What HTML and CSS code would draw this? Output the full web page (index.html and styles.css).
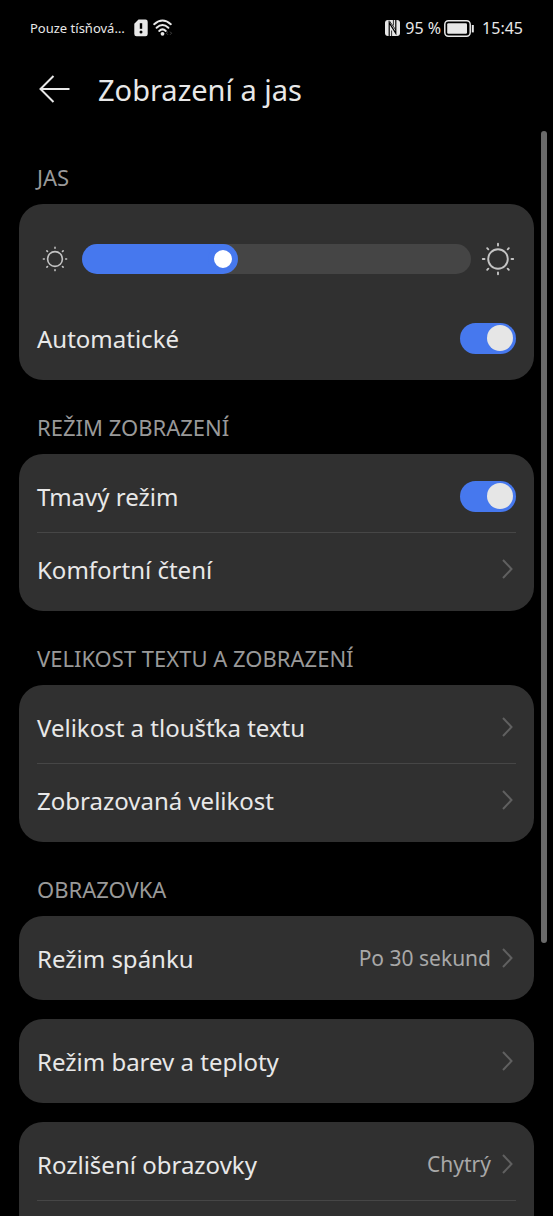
FILE: index.html
```html
<!DOCTYPE html>
<html lang="cs">
<head>
<meta charset="utf-8">
<meta name="viewport" content="width=device-width, initial-scale=1">
<title>Zobrazení a jas</title>
<link rel="stylesheet" href="styles.css">
</head>
<body>
<div class="status-bar">
  <div class="status-group">
    <span class="carrier">Pouze tísňová…</span>
    <svg class="sim-icon" width="14" height="18" viewBox="0 0 14 18" aria-hidden="true">
      <path d="M4.500 0.500H11.500Q13.700 0.500 13.700 2.700V15Q13.700 17.200 11.500 17.200H2.500Q0.300 17.200 0.300 15V4.700Z" fill="#e8e8e8"/>
      <path d="M7 4.200V9.800" stroke="#000" stroke-width="2.400"/>
      <circle cx="7" cy="13" r="1.500" fill="#000"/>
    </svg>
    <svg class="wifi-icon" width="20" height="18" viewBox="0 0 20 18" aria-hidden="true">
      <g fill="none" stroke="#e8e8e8" stroke-width="2" stroke-linecap="round">
        <path d="M1.200 5.200Q9.500 -2.200 17.800 5.200"/>
        <path d="M3.600 8.700Q9.500 3.200 15.400 8.700"/>
        <path d="M6.200 11.900Q9.500 8.800 12.800 11.900"/>
      </g>
      <circle cx="9.500" cy="14.800" r="1.900" fill="#e8e8e8"/>
      <path d="M15 12.600L13.400 14.200L15 15.800M17 12.600L18.600 14.200L17 15.800" fill="none" stroke="#444"/>
    </svg>
  </div>
  <div class="status-group">
    <svg class="nfc-icon" width="15" height="16" viewBox="0 0 15 16" aria-hidden="true">
      <rect width="15" height="16" rx="3" fill="#e8e8e8"/>
      <path d="M4.200 16V2.600L10.800 13.400V0" fill="none" stroke="#000" stroke-width="1.200"/>
      <path d="M6.600 16V10.500M8.400 5.500V0M4.200 0.600L10.800 10" fill="none" stroke="#000" stroke-width="0.800"/>
    </svg>
    <span class="status-text">95 %</span>
    <svg class="battery-icon" width="31" height="17" viewBox="0 0 31 17" aria-hidden="true">
      <rect x="0.800" y="0.800" width="25.400" height="15.400" rx="3.600" fill="none" stroke="#e8e8e8" stroke-width="1.500"/>
      <rect x="3.200" y="3.200" width="19.800" height="10.600" rx="1.200" fill="#e8e8e8"/>
      <path d="M28.800 5V12.400" stroke="#e8e8e8" stroke-width="2"/>
    </svg>
    <span class="status-text clock">15:45</span>
  </div>
</div>

<header class="app-bar">
  <button class="back" type="button" aria-label="Zpět">
    <svg width="32" height="28" viewBox="0 0 32 28" aria-hidden="true">
      <path d="M30.500 14H1.200M14.500 1L1.500 14L14.500 27" fill="none" stroke="#e8e8e8" stroke-width="2"/>
    </svg>
  </button>
  <h1>Zobrazení a jas</h1>
</header>

<main>
  <h2>JAS</h2>
  <section class="card">
    <div class="brightness">
      <svg class="sun-small" width="26" height="26" viewBox="-13 -13 26 26" aria-hidden="true">
        <g fill="none" stroke="#c4c4c4" stroke-width="1.600" stroke-linecap="round">
          <circle r="7.400"/>
          <path d="M0 -11.600V-10.700M0 11.600V10.700M-11.600 0H-10.700M11.600 0H10.700M-8.100 -8.100L-7.500 -7.500M8.100 -8.100L7.500 -7.500M-8.100 8.100L-7.500 7.500M8.100 8.100L7.500 7.500"/>
        </g>
      </svg>
      <input class="slider" type="range" min="0" max="100" value="35" aria-label="Jas">
      <svg class="sun-large" width="34" height="34" viewBox="-17 -17 34 34" aria-hidden="true">
        <g fill="none" stroke="#c4c4c4" stroke-width="1.900" stroke-linecap="round">
          <circle r="9.800"/>
          <path d="M0 -15.200V-13.500M0 15.200V13.500M-15.200 0H-13.500M15.200 0H13.500M-10.800 -10.800L-9.700 -9.700M10.800 -10.800L9.700 -9.700M-10.800 10.800L-9.700 9.700M10.800 10.800L9.700 9.700"/>
        </g>
      </svg>
    </div>
    <label class="row">
      <span class="label">Automatické</span>
      <input class="switch" type="checkbox" role="switch" checked>
    </label>
  </section>

  <h2>REŽIM ZOBRAZENÍ</h2>
  <section class="card">
    <label class="row">
      <span class="label">Tmavý režim</span>
      <input class="switch" type="checkbox" role="switch" checked>
    </label>
    <a class="row" href="#komfortni-cteni">
      <span class="label">Komfortní čtení</span>
      <svg class="chevron" width="12" height="22" viewBox="0 0 12 22" aria-hidden="true"><path d="M2 2L10.500 11L2 20"/></svg>
    </a>
  </section>

  <h2>VELIKOST TEXTU A ZOBRAZENÍ</h2>
  <section class="card">
    <a class="row" href="#velikost-textu">
      <span class="label">Velikost a tloušťka textu</span>
      <svg class="chevron" width="12" height="22" viewBox="0 0 12 22" aria-hidden="true"><path d="M2 2L10.500 11L2 20"/></svg>
    </a>
    <a class="row" href="#zobrazovana-velikost">
      <span class="label">Zobrazovaná velikost</span>
      <svg class="chevron" width="12" height="22" viewBox="0 0 12 22" aria-hidden="true"><path d="M2 2L10.500 11L2 20"/></svg>
    </a>
  </section>

  <h2>OBRAZOVKA</h2>
  <div class="card-stack">
    <section class="card">
      <a class="row" href="#rezim-spanku">
        <span class="label">Režim spánku</span>
        <span class="value">Po 30 sekund</span>
        <svg class="chevron" width="12" height="22" viewBox="0 0 12 22" aria-hidden="true"><path d="M2 2L10.500 11L2 20"/></svg>
      </a>
    </section>
    <section class="card">
      <a class="row" href="#rezim-barev">
        <span class="label">Režim barev a teploty</span>
        <svg class="chevron" width="12" height="22" viewBox="0 0 12 22" aria-hidden="true"><path d="M2 2L10.500 11L2 20"/></svg>
      </a>
    </section>
    <section class="card card-open">
      <a class="row" href="#rozliseni">
        <span class="label">Rozlišení obrazovky</span>
        <span class="value">Chytrý</span>
        <svg class="chevron" width="12" height="22" viewBox="0 0 12 22" aria-hidden="true"><path d="M2 2L10.500 11L2 20"/></svg>
      </a>
      <div class="divider"></div>
    </section>
  </div>
</main>
<div class="scrollbar" aria-hidden="true"></div>
</body>
</html>
```
FILE: styles.css
```css
* {
  box-sizing: border-box;
}

body {
  margin: 0;
  height: 100vh;
  display: flex;
  flex-direction: column;
  overflow: hidden;
  background: #000;
  color: #e8e8e8;
  font-family: "Noto Sans", sans-serif;
}

svg {
  flex: none;
  display: block;
}

.status-bar {
  flex: none;
  height: 56px;
  padding: 0 30px;
  display: flex;
  align-items: center;
  justify-content: space-between;
}

.status-group {
  display: flex;
  align-items: center;
  white-space: nowrap;
}

.carrier {
  font-size: 13px;
}

.sim-icon {
  margin-left: 9px;
}

.wifi-icon {
  margin-left: 5px;
}

.status-text {
  font-size: 16px;
  margin-left: 5px;
}

.battery-icon {
  margin-left: 3px;
}

.clock {
  margin-left: 7px;
}

.app-bar {
  flex: none;
  height: 74px;
  padding: 0 39px 8px;
  display: flex;
  align-items: center;
  gap: 27px;
}

.back {
  padding: 0;
  border: 0;
  background: none;
}

h1 {
  margin: 0;
  padding-top: 2px;
  font-size: 29px;
  font-weight: 400;
  line-height: 40px;
}

main {
  flex: 1;
  display: flex;
  flex-direction: column;
  padding: 0 19px;
}

h2 {
  flex: none;
  margin: 0;
  padding: 35px 18px 15px;
  font-size: 22px;
  font-weight: 400;
  line-height: 24px;
  color: #999;
}

.card {
  flex: none;
  padding: 6px 18px;
  border-radius: 24px;
  background: #303030;
}

.card-stack {
  flex: 1;
  display: flex;
  flex-direction: column;
  gap: 19px;
}

.card-open {
  flex: 1;
  border-radius: 24px 24px 0 0;
}

.row {
  height: 72px;
  display: flex;
  align-items: center;
  color: inherit;
  text-decoration: none;
  white-space: nowrap;
}

.row + .row {
  height: 73px;
  border-top: 1px solid #464646;
}

.divider {
  height: 1px;
  background: #464646;
}

.label {
  flex: 1;
  padding-top: 2px;
  font-size: 24px;
  line-height: 32px;
}

.value {
  font-size: 21px;
  color: #a8a8a8;
  margin-right: 10px;
}

.chevron {
  margin-right: 3px;
  fill: none;
  stroke: #606060;
  stroke-width: 2;
}

.brightness {
  display: flex;
  align-items: center;
  gap: 10px;
  height: 92px;
  padding: 5px 1px 0 5px;
}

.slider {
  appearance: none;
  flex: 1;
  min-width: 0;
  height: 30px;
  margin: 0 0 0 4px;
  border-radius: 15px;
  background: linear-gradient(#4678ee, #4678ee) 0 0 / calc(15px + (100% - 30px) * 0.35) 100% no-repeat #454545;
}

.slider::-webkit-slider-thumb {
  appearance: none;
  width: 30px;
  height: 30px;
  border: 6px solid #4678ee;
  border-radius: 50%;
  background: #fff;
}

.switch {
  appearance: none;
  flex: none;
  width: 56px;
  height: 31px;
  margin: 0;
  padding: 2px 3px;
  display: flex;
  justify-content: flex-end;
  align-items: center;
  border-radius: 16px;
  background: #4678ee;
}

.switch::before {
  content: "";
  width: 26px;
  height: 26px;
  border-radius: 50%;
  background: #e6e6e6;
}

.switch:not(:checked) {
  justify-content: flex-start;
  background: #555;
}

.scrollbar {
  position: fixed;
  top: 131px;
  right: 6px;
  width: 6px;
  height: 812px;
  border-radius: 3px;
  background: #6a6a6a;
}
```
